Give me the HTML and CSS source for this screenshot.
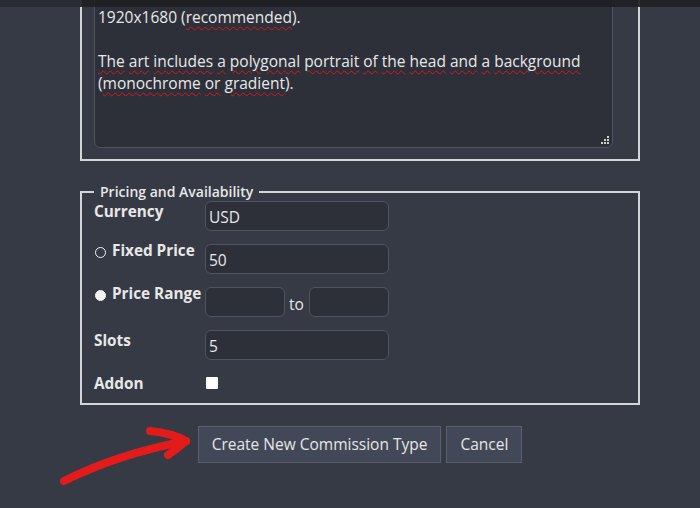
FILE: index.html
```html
<!DOCTYPE html>
<html>
<head>
    <title>New Commission Type</title>
    <link rel="stylesheet" href="styles.css">
</head>
<body>
    <div class="topbar"></div>

    <main class="page">
        <fieldset class="group group-desc">
            <div class="textarea">
                <div class="line">&nbsp;</div>
                <div class="line">1920x1680 (<span class="sp">recommended</span>).</div>
                <div class="line">&nbsp;</div>
                <div class="line"><span class="sp">The</span> <span class="sp">art</span> <span class="sp">includes</span> <span class="sp">a</span> <span class="sp">polygonal</span> <span class="sp">portrait</span> <span class="sp">of</span> <span class="sp">the</span> <span class="sp">head</span> <span class="sp">and</span> <span class="sp">a</span> <span class="sp">background</span></div>
                <div class="line">(<span class="sp">monochrome</span> <span class="sp">or</span> <span class="sp">gradient</span>).</div>
                <svg class="grip" width="9" height="9" viewBox="0 0 9 9">
                    <rect x="6" y="0" width="2" height="2" fill="#d0d0d0"/>
                    <rect x="6" y="3" width="2" height="2" fill="#d0d0d0"/>
                    <rect x="3" y="3" width="2" height="2" fill="#d0d0d0"/>
                    <rect x="6" y="6" width="2" height="2" fill="#d0d0d0"/>
                    <rect x="3" y="6" width="2" height="2" fill="#d0d0d0"/>
                    <rect x="0" y="6" width="2" height="2" fill="#d0d0d0"/>
                </svg>
            </div>
        </fieldset>

        <fieldset class="group group-pricing">
            <legend>Pricing and Availability</legend>
            <div class="form-grid">
                <label class="field-label">Currency</label>
                <input class="text-input" type="text" value="USD">

                <label class="field-label radio-label"><span class="radio"></span>Fixed Price</label>
                <input class="text-input" type="text" value="50">

                <label class="field-label radio-label"><span class="radio checked"></span>Price Range</label>
                <div class="range">
                    <input class="text-input short" type="text">
                    <span class="to">to</span>
                    <input class="text-input short" type="text">
                </div>

                <label class="field-label">Slots</label>
                <input class="text-input" type="text" value="5">

                <label class="field-label">Addon</label>
                <span class="checkbox"></span>
            </div>
        </fieldset>

        <div class="actions">
            <button class="button">Create New Commission Type</button>
            <button class="button">Cancel</button>
        </div>
    </main>

    <svg class="arrow" width="700" height="508" viewBox="0 0 700 508">
        <path d="M64 481 Q118 454 186 441" />
        <path d="M150 431 Q172 433 186 441 Q178 448 168 455" />
    </svg>
</body>
</html>
```

FILE: styles.css
```css
:root {
    --page-bg: #353a45;
    --field-bg: #2d3039;
    --field-border: #4e5462;
    --frame: #d3d5d8;
    --text-color: #e8e8e8;
}

html, body {
    height: 100%;
}

body {
    margin: 0;
    background: var(--page-bg);
    color: var(--text-color);
    font-family: 'Open Sans', 'Noto Sans', sans-serif;
    overflow: hidden;
}

.topbar {
    position: fixed;
    top: 0;
    left: 0;
    right: 0;
    height: 7px;
    z-index: 2;
    background: linear-gradient(to right, rgba(38, 41, 48, 0.8) 80px, rgba(31, 32, 35, 0.92) 80px);
}

.page {
    width: 560px;
    margin-left: 80px;
}

.group {
    margin: 0;
    border: 2px solid var(--frame);
    padding: 0 12px 11px;
    min-width: 0;
}

.group-desc {
    margin-top: -21px;
}

.textarea {
    position: relative;
    box-sizing: border-box;
    width: 519px;
    height: 167px;
    border: 1px solid var(--field-border);
    border-radius: 6px;
    background: var(--field-bg);
    padding: 2px 3px;
    font-size: 15.5px;
    line-height: 22px;
}

.sp {
    text-decoration: underline wavy #d81818;
    text-decoration-thickness: 1px;
    text-underline-offset: 3px;
}

.grip {
    position: absolute;
    right: 2px;
    bottom: 2px;
}

.group-pricing {
    margin-top: 21px;
    padding-bottom: 10px;
}

.group-pricing legend {
    padding: 0 6px;
    font-size: 14px;
    font-weight: 600;
    line-height: 19px;
}

.form-grid {
    display: grid;
    grid-template-columns: 111px auto;
    row-gap: 13px;
    align-items: start;
}

.field-label {
    font-size: 15.3px;
    font-weight: 700;
    line-height: 20px;
    display: flex;
    align-items: center;
}

.radio-label {
    margin-top: -4px;
}

.radio {
    box-sizing: border-box;
    width: 11px;
    height: 11px;
    border: 1.7px solid #f2f2f2;
    border-radius: 50%;
    margin: 4px 6px 0 1px;
}

.radio.checked {
    background: #f2f2f2;
}

.text-input {
    box-sizing: border-box;
    width: 184px;
    height: 30px;
    margin: 0;
    padding: 2px 3px 0;
    border: 1px solid var(--field-border);
    border-radius: 6px;
    background: var(--field-bg);
    color: var(--text-color);
    font-family: inherit;
    font-size: 15.5px;
    outline: none;
}

.range {
    display: flex;
    align-items: center;
}

.text-input.short {
    width: 80px;
}

.to {
    font-size: 15.5px;
    padding: 4px 5px 0 4px;
}

.checkbox {
    width: 12px;
    height: 12px;
    margin: 4px 0 0 1px;
    background: #ffffff;
    border-radius: 1px;
}

.actions {
    display: flex;
    justify-content: center;
    gap: 5px;
    margin-top: 21px;
}

.button {
    padding: 7px 13px;
    border: 1px solid #585f6f;
    background: #424858;
    color: #e6e6e6;
    font-family: inherit;
    font-size: 15.5px;
    line-height: 21px;
}

.arrow {
    position: absolute;
    top: 0;
    left: 0;
    pointer-events: none;
    fill: none;
    stroke: #e41b1b;
    stroke-width: 8;
    stroke-linecap: round;
    stroke-linejoin: round;
}
```
